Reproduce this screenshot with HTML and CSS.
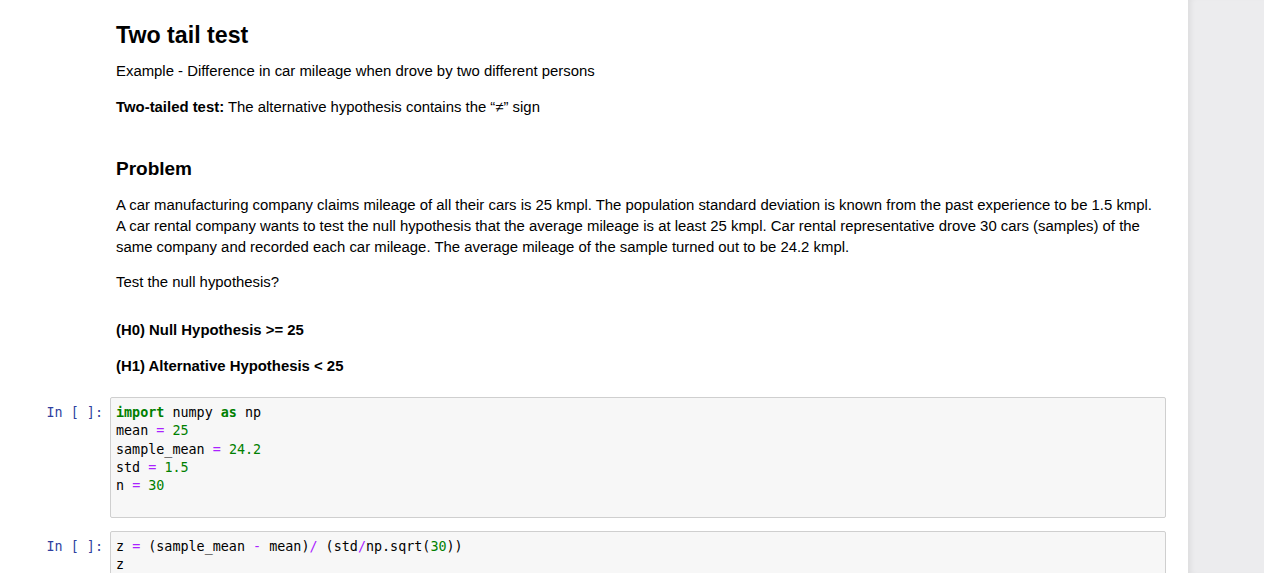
FILE: index.html
```html
<!DOCTYPE html>
<html>
<head>
<meta charset="utf-8">
<link rel="stylesheet" href="styles.css">
</head>
<body>
<div class="page">
  <div class="notebook">
    <div class="cell">
      <div class="prompt"></div>
      <div class="rendered">
        <h2 class="h-title">Two tail test</h2>
        <p class="p-example">Example - Difference in car mileage when drove by two different persons</p>
        <p class="p-gap"><b>Two-tailed test:</b> The alternative hypothesis contains the “≠” sign</p>
        <h3 class="h-problem">Problem</h3>
        <p class="p-problem">A car manufacturing company claims mileage of all their cars is 25 kmpl. The population standard deviation is known from the past experience to be 1.5 kmpl. A car rental company wants to test the null hypothesis that the average mileage is at least 25 kmpl. Car rental representative drove 30 cars (samples) of the same company and recorded each car mileage. The average mileage of the sample turned out to be 24.2 kmpl.</p>
        <p class="p-test">Test the null hypothesis?</p>
        <p class="p-h0"><b>(H0) Null Hypothesis &gt;= 25</b></p>
        <p class="p-gap"><b>(H1) Alternative Hypothesis &lt; 25</b></p>
      </div>
    </div>
    <div class="cell code-cell first-code">
      <div class="prompt">In&nbsp;[&nbsp;]:</div>
      <div class="input"><pre><span class="kw">import</span> numpy <span class="kw">as</span> np
mean <span class="op">=</span> <span class="num">25</span>
sample_mean <span class="op">=</span> <span class="num">24.2</span>
std <span class="op">=</span> <span class="num">1.5</span>
n <span class="op">=</span> <span class="num">30</span>
<span class="blank"> </span></pre></div>
    </div>
    <div class="cell code-cell second-code">
      <div class="prompt">In&nbsp;[&nbsp;]:</div>
      <div class="input"><pre>z <span class="op">=</span> (sample_mean <span class="op">-</span> mean)<span class="op">/</span> (std<span class="op">/</span>np.sqrt(<span class="num">30</span>))
z</pre></div>
    </div>
  </div>
  <div class="side"></div>
</div>
</body>
</html>
```
FILE: styles.css
```css
html, body {
  margin: 0;
  padding: 0;
  background: #ffffff;
  overflow: hidden;
}
.page {
  display: flex;
  width: 1264px;
  height: 573px;
  overflow: hidden;
}
.notebook {
  width: 1188px;
  flex: none;
  background: #ffffff;
  padding: 0 22px 0 30px;
  box-sizing: border-box;
}
.side {
  flex: 1;
  background: #ececee;
  box-shadow: inset 6px 0 6px -4px rgba(0,0,0,0.08);
}
.cell {
  display: flex;
}
.prompt {
  width: 80px;
  flex: none;
  box-sizing: border-box;
  padding-right: 7px;
  text-align: right;
  font-family: "DejaVu Sans Mono", monospace;
  font-size: 13.4px;
  line-height: 18.3px;
  color: #303f9f;
  padding-top: 7px;
}
.rendered {
  flex: 1;
  padding-left: 6px;
  padding-right: 6px;
  font-family: "Liberation Sans", Arial, sans-serif;
  font-size: 14.9px;
  color: #000;
  padding-top: 20px;
}
.rendered h2, .rendered h3, .rendered p {
  margin: 0;
}
.h-title {
  font-size: 23.2px;
  font-weight: bold;
  line-height: 30px;
}
.rendered p {
  line-height: 21px;
}
.p-example { margin-top: 10.5px !important; }
.p-gap { margin-top: 15px !important; }
.h-problem {
  font-size: 19px;
  font-weight: bold;
  line-height: 24px;
  margin-top: 39.5px !important;
}
.p-problem { margin-top: 13.5px !important; }
.p-test { margin-top: 14px !important; }
.p-h0 { margin-top: 27px !important; }
.first-code { margin-top: 20.5px; }
.first-code .input { padding-bottom: 3px; }
.second-code { margin-top: 13px; }
.input {
  flex: 1;
  background: #f7f7f7;
  border: 1px solid #cfcfcf;
  border-radius: 2px;
  padding: 6px 5px 2px 5px;
}
.input pre {
  margin: 0;
  font-family: "DejaVu Sans Mono", monospace;
  font-size: 13.4px;
  line-height: 18.3px;
  color: #000;
}
.kw { color: #008000; font-weight: bold; }
.op { color: #aa22ff; }
.num { color: #008000; }
```
